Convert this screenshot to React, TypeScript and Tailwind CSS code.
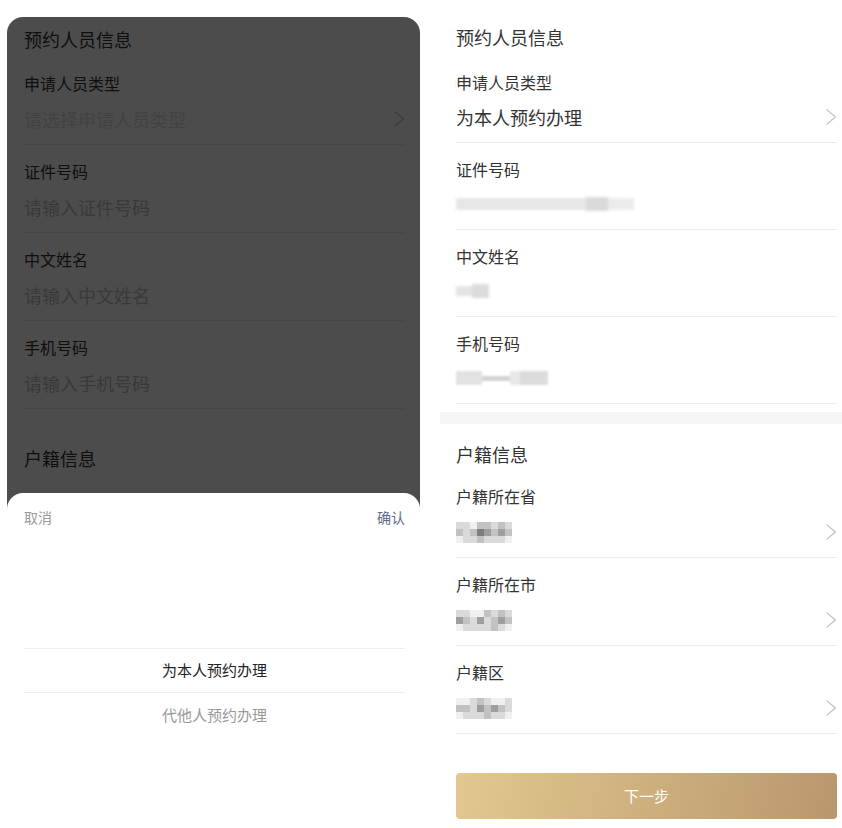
import React from "react";

type Shade = "a" | "b" | "c" | "d" | "e";

type FieldProps = {
  readonly label: string;
  readonly children: React.ReactNode;
  readonly select?: boolean;
  readonly roomy?: boolean;
};

const SHADES: Record<Shade, string> = {
  a: "bg-[#f0f0f0]",
  b: "bg-[#dadada]",
  c: "bg-[#c2c2c2]",
  d: "bg-[#9e9e9e]",
  e: "bg-[#7e7e7e]",
};

const PROVINCE = ["bbaccbcb", "cbcedcdc", "abbcbbba"];
const CITY = ["bbaacbcb", "dcbdbcdc", "abbbbcba"];
const DISTRICT = ["aabcbaab", "ccbdcdcb", "abbbcbba"];

const Chevron = () => (
  <svg width="12" height="18" viewBox="0 0 12 18" fill="none">
    <polyline points="1.5,1.5 10.5,9 1.5,16.5" stroke="#c4c4c4" strokeWidth="1.2" />
  </svg>
);

const Mosaic = ({ rows }: { readonly rows: string[] }) => (
  <div className="flex flex-col blur-[0.6px]">
    {rows.map((row, i) => (
      <div key={i} className="flex">
        {row.split("").map((c, j) => (
          <div key={j} className={`h-[7px] w-[7px] ${SHADES[c as Shade]}`} />
        ))}
      </div>
    ))}
  </div>
);

const Field = ({ label, children, select = false, roomy = true }: FieldProps) => (
  <div className="border-b border-[#ececec] pt-[15px] pb-[13px]">
    <div className="text-[16px] leading-[22px] text-[#333]">{label}</div>
    <div
      className={`flex h-[24px] items-center justify-between ${roomy ? "mt-[13px]" : "mt-[12px]"}`}
    >
      <div className="flex items-center text-[18px] leading-[24px]">{children}</div>
      {select && <Chevron />}
    </div>
  </div>
);

const Placeholder = ({ text, light = false }: { readonly text: string; readonly light?: boolean }) => (
  <span className={light ? "text-[#dedede]" : "text-[#c0c0c0]"}>{text}</span>
);

const LeftPhone = () => (
  <div className="relative h-[811px] w-[413px] overflow-hidden rounded-t-[16px] bg-white">
    <div className="pl-[17px] pr-[15px] pt-[10px]">
      <h2 className="pb-[6px] text-[18px] leading-[24px] text-[#333]">预约人员信息</h2>
      <Field label="申请人员类型" select>
        <Placeholder text="请选择申请人员类型" light />
      </Field>
      <Field label="证件号码">
        <Placeholder text="请输入证件号码" />
      </Field>
      <Field label="中文姓名">
        <Placeholder text="请输入中文姓名" />
      </Field>
      <Field label="手机号码">
        <Placeholder text="请输入手机号码" />
      </Field>
      <h2 className="pt-[37px] text-[18px] leading-[24px] text-[#333]">户籍信息</h2>
    </div>
    <div className="absolute inset-0 bg-black/70" />
    <div className="absolute inset-x-0 top-[476px] bottom-0 rounded-t-[16px] bg-white">
      <div className="flex h-[44px] items-start justify-between pl-[17px] pr-[15px] pt-[14px] text-[14px] leading-[20px]">
        <span className="text-[#999]">取消</span>
        <span className="text-[#5b6b8c]">确认</span>
      </div>
      <div className="pl-[17px] pr-[15px] pt-[111px] text-center text-[15px]">
        <div className="flex h-[45px] items-center justify-center border-y border-[#eeeeee] text-[#222]">
          为本人预约办理
        </div>
        <div className="flex h-[44px] items-center justify-center text-[#999]">代他人预约办理</div>
      </div>
    </div>
  </div>
);

const RightPhone = () => (
  <div className="w-[402px] bg-white pt-[25px]">
    <div className="pl-[16px] pr-[5px]">
      <h2 className="pb-[7px] text-[18px] leading-[24px] text-[#333]">预约人员信息</h2>
      <Field label="申请人员类型" select roomy={false}>
        <span className="text-[#333]">为本人预约办理</span>
      </Field>
      <Field label="证件号码" roomy={false}>
        <div className="flex items-center blur-[1.5px]">
          <div className="h-[12px] w-[130px] bg-[#e6e6e6]" />
          <div className="h-[14px] w-[22px] bg-[#dadada]" />
          <div className="h-[12px] w-[26px] bg-[#ebebeb]" />
        </div>
      </Field>
      <Field label="中文姓名" roomy={false}>
        <div className="flex items-center blur-[1.5px]">
          <div className="h-[10px] w-[16px] bg-[#e4e4e4]" />
          <div className="h-[14px] w-[17px] bg-[#dcdcdc]" />
        </div>
      </Field>
      <Field label="手机号码" roomy={false}>
        <div className="flex items-center blur-[1.2px]">
          <div className="h-[14px] w-[26px] bg-[#e2e2e2]" />
          <div className="h-[5px] w-[28px] bg-[#d4d4d4]" />
          <div className="h-[14px] w-[10px] bg-[#e8e8e8]" />
          <div className="h-[14px] w-[28px] bg-[#dcdcdc]" />
        </div>
      </Field>
    </div>
    <div className="mt-[8px] h-[12px] bg-[#f5f5f5]" />
    <div className="pl-[16px] pr-[5px]">
      <h2 className="pt-[18px] pb-[4px] text-[18px] leading-[24px] text-[#333]">户籍信息</h2>
      <Field label="户籍所在省" select>
        <Mosaic rows={PROVINCE} />
      </Field>
      <Field label="户籍所在市" select>
        <Mosaic rows={CITY} />
      </Field>
      <Field label="户籍区" select>
        <Mosaic rows={DISTRICT} />
      </Field>
      <button
        type="button"
        className="mt-[39px] flex h-[46px] w-full items-center justify-center rounded-[4px] bg-linear-[100deg] from-[#e2c890] to-[#b9976c] text-[15px] text-white"
      >
        下一步
      </button>
    </div>
  </div>
);

export default function App() {
  return (
    <div className="flex h-[828px] w-[842px] overflow-hidden bg-white font-['Noto_Sans_CJK_SC',sans-serif]">
      <div className="w-[421px] shrink-0 pl-[7px] pt-[17px]">
        <LeftPhone />
      </div>
      <div className="shrink-0 pl-[19px]">
        <RightPhone />
      </div>
    </div>
  );
}
